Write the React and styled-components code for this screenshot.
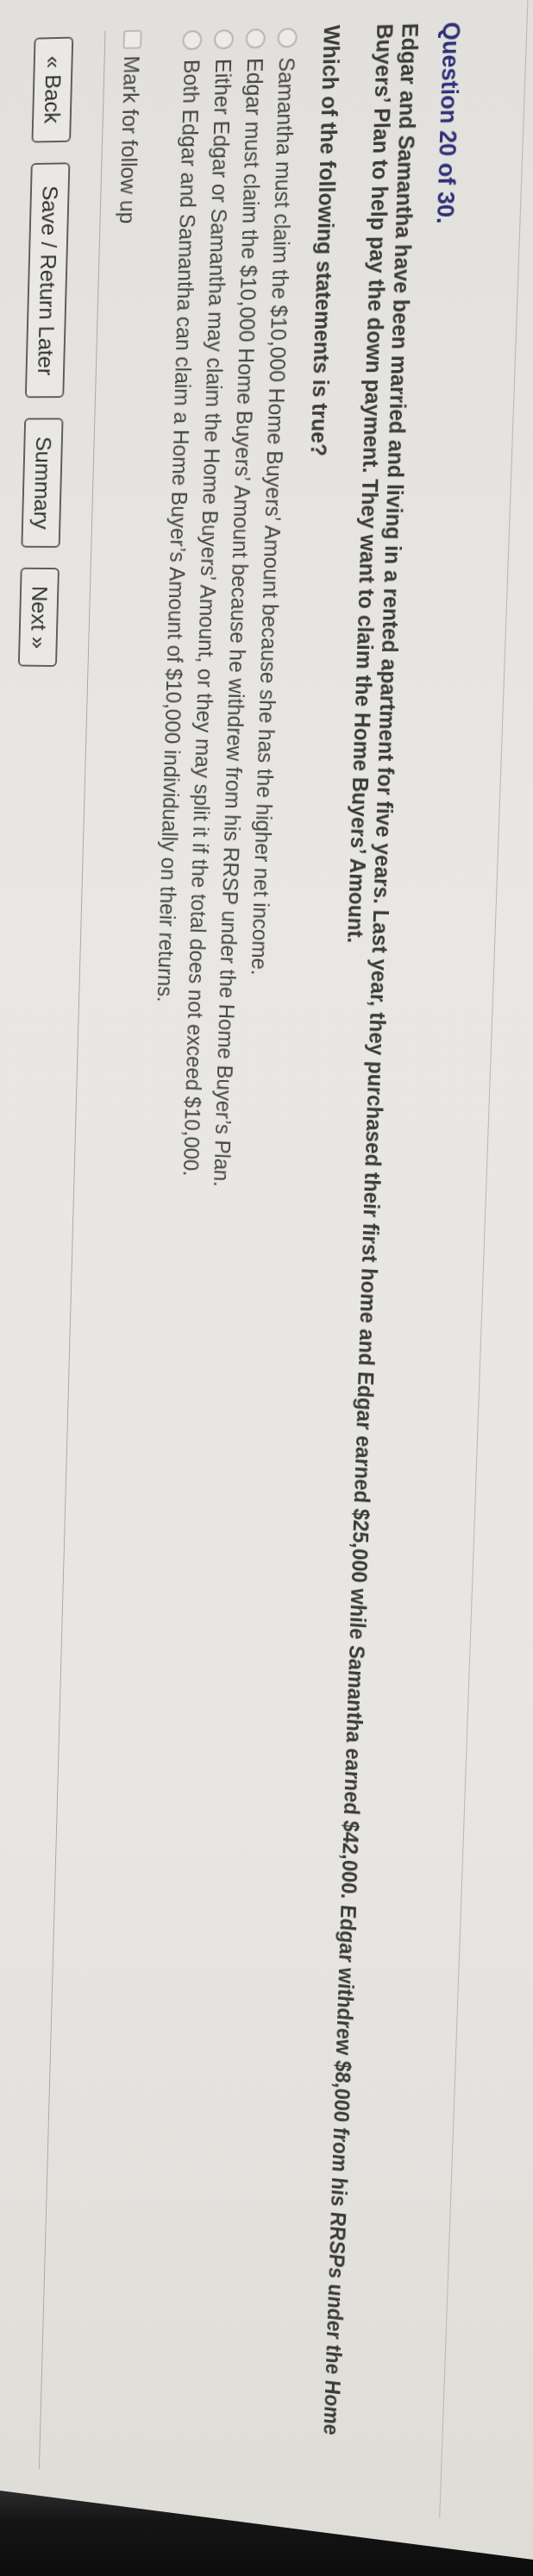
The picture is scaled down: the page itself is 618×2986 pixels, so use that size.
import React from 'react'
import styled, { createGlobalStyle } from 'styled-components'

// The photo shows the exam page turned a quarter clockwise, so the sheet is
// laid out in vertical-rl (page top = right edge, page left = top edge) and
// then tilted a little to follow the camera angle.

const GlobalStyle = createGlobalStyle`
    html, body {
        margin: 0;
        padding: 0;
        height: 2986px;
        overflow: hidden;
    }
    body {
        background: #e3e2de;
        font-family: "Liberation Sans", Arial, Helvetica, sans-serif;
    }
`

const Stage = styled.div`
    width: 618px;
    height: 2986px;
    overflow: hidden;
    display: flex;
    flex-direction: column;
    background: linear-gradient(180deg, #e1e0dc 0%, #e8e7e3 35%, #e7e6e2 70%, #dddcd7 100%);
`

const Screen = styled.div`
    flex: none;
    height: 2887px;
    transform-origin: 309px 0;
    transform: matrix(1, -0.027, -0.032, 1, 0, 0) perspective(1500px) rotateY(-4.4deg) rotateX(-1.4deg);
`

const Sheet = styled.div`
    writing-mode: vertical-rl;
    width: 618px;
    height: 3056px;
    box-sizing: border-box;
    padding-block-start: 9px;
    color: #3b3b3b;
`

const QuestionBox = styled.div`
    border-block-start: 1px solid #b7b6b2;
    padding-block-start: 70px;
    padding-block-end: 36px;
    padding-inline-start: 31px;
    margin-inline-end: 30px;
`

const Heading = styled.h2`
    margin: 0;
    font-size: 27px;
    line-height: 31px;
    font-weight: 700;
    color: #2e3079;
`

const Stem = styled.p`
    margin: 0;
    margin-block-start: ${props => props.gap}px;
    font-size: 25px;
    line-height: 29px;
    font-weight: 700;
    color: #3a3a3a;
`

const Options = styled.div`
    margin-block-start: 18px;
`

const OptionRow = styled.div`
    display: flex;
    align-items: center;
    block-size: 37px;
    font-size: 25px;
    line-height: 29px;
    color: #464646;
`

const Radio = styled.span`
    flex: none;
    box-sizing: border-box;
    inline-size: 23px;
    block-size: 23px;
    margin-inline-start: 2px;
    margin-inline-end: 11px;
    border: 2px solid #b8b7b4;
    border-radius: 50%;
    background: #ecebe8;
`

const FollowUp = styled.label`
    display: flex;
    align-items: center;
    block-size: 37px;
    margin-block-start: 34px;
    font-size: 25px;
    line-height: 29px;
    color: #464646;
`

const CheckBox = styled.span`
    flex: none;
    box-sizing: border-box;
    inline-size: 22px;
    block-size: 22px;
    margin-inline-end: 8px;
    border: 2px solid #bcbbb8;
    border-radius: 4px;
    background: #ecebe8;
`

const Rule = styled.div`
    margin-block-start: 13px;
    border-block-start: 1px solid #a9a8a4;
`

const ButtonBar = styled.div`
    display: flex;
    gap: 24px;
    margin-block-start: 37px;
    padding-inline-start: 6px;
`

const NavButton = styled.div`
    display: flex;
    align-items: center;
    justify-content: center;
    box-sizing: border-box;
    block-size: 47px;
    padding-inline: ${props => (props.wide ? 25 : 20)}px;
    border: 2px solid #5c5c5c;
    border-radius: 6px;
    background: #e9e8e5;
    font-size: 26px;
    line-height: 1;
    color: #303030;
    white-space: nowrap;
    cursor: pointer;
`

const Bezel = styled.div`
    flex: 1;
    background: linear-gradient(180deg, #2b2b2b 0%, #151515 35%, #0c0c0c 100%);
    clip-path: polygon(0 0, 100% 80px, 100% 100%, 0 100%);
`

const respostas = [
    'Samantha must claim the $10,000 Home Buyers\u2019 Amount because she has the higher net income.',
    'Edgar must claim the $10,000 Home Buyers\u2019 Amount because he withdrew from his RRSP under the Home Buyer\u2019s Plan.',
    'Either Edgar or Samantha may claim the Home Buyers\u2019 Amount, or they may split it if the total does not exceed $10,000.',
    'Both Edgar and Samantha can claim a Home Buyer\u2019s Amount of $10,000 individually on their returns.',
]

class App extends React.Component {
    render() {
        return (
            <Stage>
                <GlobalStyle />
                <Screen>
                    <Sheet>
                        <QuestionBox>
                            <Heading>Question 20 of 30.</Heading>
                            <Stem gap={17}>
                                Edgar and Samantha have been married and living in a rented apartment for five years. Last year, they purchased their first home and Edgar earned $25,000 while Samantha earned $42,000. Edgar withdrew $8,000 from his RRSPs under the Home Buyers’ Plan to help pay the down payment. They want to claim the Home Buyers’ Amount.
                            </Stem>
                            <Stem gap={32}>Which of the following statements is true?</Stem>
                            <Options>
                                {respostas.map(texto => (
                                    <OptionRow key={texto}>
                                        <Radio />
                                        <span>{texto}</span>
                                    </OptionRow>
                                ))}
                            </Options>
                            <FollowUp>
                                <CheckBox />
                                Mark for follow up
                            </FollowUp>
                            <Rule />
                            <ButtonBar>
                                <NavButton role="button">« Back</NavButton>
                                <NavButton role="button" wide>Save / Return Later</NavButton>
                                <NavButton role="button">Summary</NavButton>
                                <NavButton role="button">Next »</NavButton>
                            </ButtonBar>
                        </QuestionBox>
                    </Sheet>
                </Screen>
                <Bezel />
            </Stage>
        )
    }
}

export default App
